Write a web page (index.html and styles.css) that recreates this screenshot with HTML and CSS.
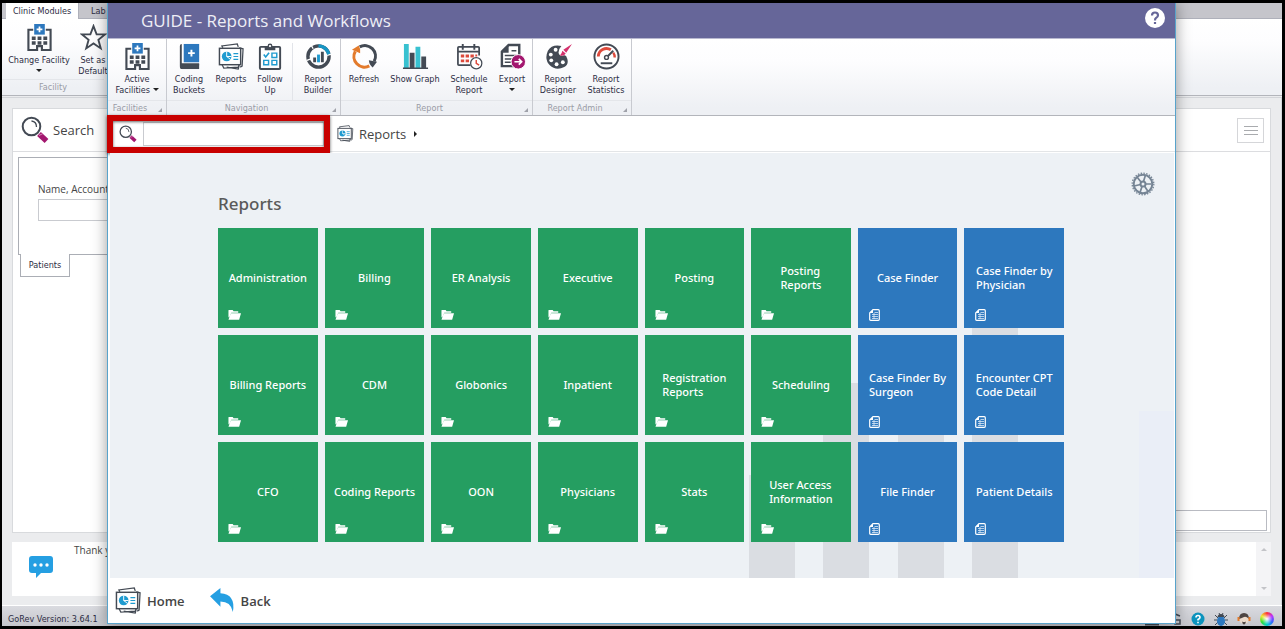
FILE: index.html
```html
<!DOCTYPE html>
<html lang="en">
<head>
    <meta charset="UTF-8">
    <meta name="viewport" content="width=device-width, initial-scale=1.0">
    <title>GUIDE - Reports and Workflows</title>
    <link rel="stylesheet" href="styles.css">
</head>
<body>

    <!--shared icons-->
    <svg class="sprite" width="0" height="0" aria-hidden="true">
        <symbol id="i-facility" viewBox="0 0 26 28">
            <path d="M6.500 6H1.500V27H10.500V23H15.500V27H24.500V6H19.500" fill="none" stroke="#434a54" stroke-width="2.200"/>
            <path d="M5 13h4v3.500H5zM11 13h4v3.500h-4zM17 13h4v3.500h-4zM5 18h4v3.500H5zM11 18h4v3.500h-4zM17 18h4v3.500h-4z" fill="#434a54"/>
            <rect x="7.500" y="0" width="11" height="11" fill="#2d78be"/>
            <path d="M13 2.500v6M10 5.500h6" stroke="#fff" stroke-width="1.800"/>
        </symbol>
        <symbol id="i-star" viewBox="0 0 26 26">
            <path d="M13 2l3 8h8l-6.300 5.200L20 23.500l-7-4.800-7 4.800 2.300-8.300L2 10h8z" fill="none" stroke="#434a54" stroke-width="1.800"/>
        </symbol>
        <symbol id="i-book" viewBox="0 0 26 28">
            <path d="M3 3Q3 1 5 1V21H23V23H6v2H22v2H5Q3 27 3 24z" fill="#434a54"/>
            <path d="M5 22h18v5H5z" fill="#434a54"/>
            <rect x="7" y="1" width="16" height="19" fill="#2d78be"/>
            <path d="M15 7v7M11.500 10.500h7" stroke="#fff" stroke-width="2"/>
        </symbol>
        <symbol id="i-reports" viewBox="0 0 28 28">
            <path d="M5 5L4 3 20 1l1 3M22 5l4 1-1 18-2 1M4 22l2 4 15-1 1-3M9 25l12 2 1-4" fill="#fff" stroke="#434a54" stroke-width="1.300"/>
            <rect x="1.500" y="5.500" width="22" height="17" fill="#fff" stroke="#434a54" stroke-width="1.500"/>
            <circle cx="9" cy="14" r="5" fill="#1f9bd0"/>
            <path d="M9 14V9M9 14h5M9 14l4 3" stroke="#fff"/>
            <path d="M16 11h5M16 14h5M16 17h5" stroke="#1f9bd0" stroke-width="1.200"/>
        </symbol>
        <symbol id="i-follow" viewBox="0 0 26 28">
            <path d="M9 4H3q-1 0-1 1v21q0 1 1 1h19q1 0 1-1V5q0-1-1-1h-6" fill="none" stroke="#434a54" stroke-width="2"/>
            <path d="M7 3h3q0-2.500 2.500-2.500T15 3h3v4.500H7z" fill="#434a54"/>
            <circle cx="12.500" cy="3.200" r="1.200" fill="#fff"/>
            <path d="M6 12l2 2.500 3.500-4.500" fill="none" stroke="#1f9bd0" stroke-width="1.700"/>
            <path d="M14.500 10.500h5v4.500h-5zM6 18h5v4.500H6zM14.500 18h5v4.500h-5z" fill="none" stroke="#1f9bd0" stroke-width="1.500"/>
        </symbol>
        <symbol id="i-builder" viewBox="0 0 28 28">
            <circle cx="14" cy="14" r="11" fill="none" stroke="#434a54" stroke-width="3.500"/>
            <path d="M14 3A11 11 0 0 1 24.800 12" fill="none" stroke="#1796c4" stroke-width="3.500"/>
            <path d="M8.500 6L6.500 2.500M23 13l4-1.500M2 18l4-1.500" stroke="#fff" stroke-width="1.300"/>
            <path d="M8.500 15h3v5h-3zM16.500 9h3v11h-3z" fill="#434a54"/>
            <path d="M12.500 12h3v8h-3z" fill="#1f9bd0"/>
        </symbol>
        <symbol id="i-refresh" viewBox="0 0 28 28">
            <path d="M9 4.100A11 11 0 0 1 24 19" fill="none" stroke="#434a54" stroke-width="3.200"/>
            <path d="M18.500 18l8.500 1.500-4.500 6q-3.500-2.500-4-7.500z" fill="#434a54"/>
            <path d="M19 23.800A11 11 0 0 1 4.500 8.500" fill="none" stroke="#e37b2c" stroke-width="3.200"/>
            <path d="M9.500 10.500L1 7l7-4.500q2 3 1.500 8z" fill="#e37b2c"/>
        </symbol>
        <symbol id="i-graph" viewBox="0 0 28 28">
            <path d="M2 1h5v25H2zM14 4h5v22h-5z" fill="#38c1d0"/>
            <path d="M8 10h5v16H8zM20 14h5v12h-5zM1 25.500h26V27H1z" fill="#434a54"/>
        </symbol>
        <symbol id="i-schedule" viewBox="0 0 28 28">
            <path d="M15 23H3q-1 0-1-1V5q0-1 1-1h20q1 0 1 1v8M2 9h22" fill="none" stroke="#434a54" stroke-width="1.800"/>
            <path d="M7 1v6M19 1v6" stroke="#434a54" stroke-width="2"/>
            <path d="M5 12h3.500v3H5zM10 12h3.500v3H10zM15 12h3.500v3H15zM20 12h2v2h-2zM5 17h3.500v3H5zM10 17h3.500v3H10z" fill="#dd4a3c"/>
            <circle cx="21" cy="21" r="5.800" fill="#fff" stroke="#434a54" stroke-width="1.300"/>
            <path d="M21 17.500V21l3 2" fill="none" stroke="#dd4a3c" stroke-width="1.500"/>
        </symbol>
        <symbol id="i-export" viewBox="0 0 28 28">
            <path d="M3 9L10 2h11v22H3z" fill="#fff" stroke="#434a54" stroke-width="2.500"/>
            <path d="M10 2v8H3z" fill="#434a54"/>
            <path d="M13 8h5M6 13h12M6 16.500h8M6 20h7" stroke="#434a54" stroke-width="1.500"/>
            <circle cx="20" cy="19.500" r="7.500" fill="#a3176f" stroke="#fff"/>
            <path d="M16 19.500h7M20.500 16.500l3 3-3 3" fill="none" stroke="#fff" stroke-width="1.700"/>
        </symbol>
        <symbol id="i-designer" viewBox="0 0 28 28">
            <path d="M17 3Q7 1 3 8-1 17 5 23t15 2q5-3 3-9-1-4-4-3-4 1-5-3 0-4 3-7z" fill="#434a54"/>
            <g fill="#fff"><circle cx="11" cy="7" r="2"/><circle cx="6" cy="12" r="2"/><circle cx="6.500" cy="18" r="2"/><circle cx="12" cy="22" r="2"/><circle cx="18.500" cy="20" r="2"/></g>
            <path d="M28 1L19 7l3 3zM18 8l3.500 3q-2 3-6 2 2-2 2.500-5z" fill="#d4316c"/>
        </symbol>
        <symbol id="i-stats" viewBox="0 0 28 28">
            <circle cx="14" cy="14" r="12.500" fill="#fff" stroke="#434a54" stroke-width="2"/>
            <path d="M5.500 14a8.500 8.500 0 0 1 13-7" fill="none" stroke="#dd4a3c" stroke-width="3"/>
            <path d="M21 10a8 8 0 0 1 1.500 5" fill="none" stroke="#dd4a3c" stroke-width="2.500"/>
            <path d="M14 15l7-7" stroke="#434a54" stroke-width="2"/>
            <circle cx="14" cy="15" r="2" fill="#fff" stroke="#434a54" stroke-width="1.500"/>
            <path d="M8 21h12" stroke="#434a54" stroke-width="2"/>
        </symbol>
        <symbol id="i-search" viewBox="0 0 28 28">
            <circle cx="10.500" cy="10.500" r="8.800" fill="#fff" stroke="#434a54" stroke-width="2"/>
            <path d="M10.500 5q5 .5 5 6" fill="none" stroke="#434a54" stroke-width="1.300"/>
            <path d="M18 18l7.500 7" stroke="#a3176f" stroke-width="5.500"/>
            <path d="M18 19.500l4-2" stroke="#d88abb"/>
        </symbol>
        <symbol id="i-folder" viewBox="0 0 14 11">
            <path d="M1 0h4l1 1.500h5V3H3.500L1.500 8H.500V.500z" fill="#fff"/>
            <path d="M3 3.700H14l-2 6.800H.500z" fill="#fff"/>
        </symbol>
        <symbol id="i-doc" viewBox="0 0 11 12">
            <path d="M4 .700h5.300q1 0 1 1v8.600q0 1-1 1H1.700q-1 0-1-1V4z" fill="none" stroke="#fff" stroke-width="1.200"/>
            <path d="M4 .500v3.500H.500z" fill="#fff"/>
            <path d="M3 5.500h6M3 7.500h6M3 9.500h6M5.500 3.500H9M5 4v6" fill="none" stroke="#dbe9f6" stroke-width=".800"/>
        </symbol>
    </svg>

    <div class="app">
        <div class="tab_row">
            <button class="tab active">Clinic Modules</button>
            <button class="tab">Lab</button>
        </div>

        <div class="app_ribbon">
            <div class="app_group">
                <div class="group_btns">
                    <button class="ribbon_btn w70"><svg><use href="#i-facility"/></svg><span>Change Facility</span><i class="caret"></i></button>
                    <button class="ribbon_btn w34"><svg><use href="#i-star"/></svg><span>Set as Default</span></button>
                </div>
                <div class="app_group_title">Facility</div>
            </div>
        </div>

        <div class="content">
            <div class="panel">
                <div class="panel_header">
                    <svg class="search_icon"><use href="#i-search"/></svg>
                    <h2>Search</h2>
                    <button class="menu_btn" aria-label="Menu"><i></i><i></i><i></i></button>
                </div>
                <div class="patient_form">
                    <label for="patient_name">Name, Account</label>
                    <input type="text" id="patient_name">
                </div>
                <button class="patient_tab">Patients</button>
                <input type="text" class="panel_input" aria-label="Details">
            </div>

            <div class="message">
                <svg class="chat" viewBox="0 0 24 22">
                    <path d="M3 0h18q3 0 3 3v11q0 3-3 3h-9l-5 5v-5H3q-3 0-3-3V3q0-3 3-3z" fill="#259fe2"/>
                    <g fill="#fff"><circle cx="6" cy="9" r="1.700"/><circle cx="12" cy="9" r="1.700"/><circle cx="18" cy="9" r="1.700"/></g>
                </svg>
                <p>Thank you</p>
                <div class="scroll"><i class="up"></i><i class="down"></i></div>
            </div>
        </div>

        <div class="status">
            <span>GoRev Version: 3.64.1</span>
            <div class="status_icons">
                <svg viewBox="0 0 14 14"><path d="M2 3h10v8H2zM0 12.500h14" fill="none" stroke="#434a54" stroke-width="2"/></svg>
                <svg viewBox="0 0 14 14"><path d="M7 2l5 2M7 8h5v4H7z" fill="none" stroke="#434a54" stroke-width="1.500"/></svg>
                <svg viewBox="0 0 14 14"><circle cx="7" cy="7" r="6.500" fill="#0c93bd"/><path d="M5 5.500Q5 3.500 7 3.500T9 5.500Q9 6.500 7 7.500V8.500M7 9.700v1.500" fill="none" stroke="#fff" stroke-width="1.600"/></svg>
                <svg viewBox="0 0 14 14"><path d="M1 3l3 3M0 8h3M1 13l3-3M13 3l-3 3M14 8h-3M13 13l-3-3M5 1l1 2M9 1L8 3" stroke="#434a54"/><ellipse cx="7" cy="9" rx="4" ry="5" fill="#2d78be"/><path d="M3.500 5Q4 2 7 2t3.500 3z" fill="#434a54"/></svg>
                <svg viewBox="0 0 14 14"><circle cx="7" cy="7" r="5" fill="#ead9cb"/><path d="M2 7Q2 1 7 1t5 6Q9 4 7 5T2 7z" fill="#4d4543"/><path d="M1.500 5v4M12.500 5v4" stroke="#e37b2c" stroke-width="2"/><path d="M5 9.500q2 1 4 0-.5 3-2 3t-2-3z" fill="#4d4543"/></svg>
                <span class="wheel"></span>
            </div>
        </div>

        <!--reports window-->
        <div class="dialog">
            <div class="title_bar">
                <h1>GUIDE - Reports and Workflows</h1>
                <button class="help" aria-label="Help"><svg viewBox="0 0 20 20"><path d="M7 7.500Q7 4.500 10 4.500t3 2.800Q13 9 11 10 10 10.500 10 12.500M10 14v2" fill="none" stroke="#666699" stroke-width="2.200"/></svg></button>
            </div>

            <div class="ribbon">
                <div class="group">
                    <div class="group_btns">
                        <button class="ribbon_btn w52"><svg><use href="#i-facility"/></svg><span>Active Facilities <i class="caret"></i></span></button>
                    </div>
                    <div class="group_title">Facilities</div>
                </div>
                <div class="group nav">
                    <div class="group_btns">
                        <button class="ribbon_btn w40"><svg><use href="#i-book"/></svg><span>Coding Buckets</span></button>
                        <button class="ribbon_btn w40"><svg><use href="#i-reports"/></svg><span>Reports</span></button>
                        <button class="ribbon_btn w34"><svg><use href="#i-follow"/></svg><span>Follow<br>Up</span></button>
                        <i class="sep"></i>
                        <button class="ribbon_btn w40"><svg><use href="#i-builder"/></svg><span>Report Builder</span></button>
                    </div>
                    <div class="group_title">Navigation</div>
                </div>
                <div class="group">
                    <div class="group_btns">
                        <button class="ribbon_btn w40"><svg><use href="#i-refresh"/></svg><span>Refresh</span></button>
                        <button class="ribbon_btn w56"><svg><use href="#i-graph"/></svg><span>Show Graph</span></button>
                        <button class="ribbon_btn w46"><svg><use href="#i-schedule"/></svg><span>Schedule Report</span></button>
                        <button class="ribbon_btn w34"><svg><use href="#i-export"/></svg><span>Export</span><i class="caret"></i></button>
                    </div>
                    <div class="group_title">Report</div>
                </div>
                <div class="group nav">
                    <div class="group_btns">
                        <button class="ribbon_btn w46"><svg><use href="#i-designer"/></svg><span>Report Designer</span></button>
                        <button class="ribbon_btn w46"><svg><use href="#i-stats"/></svg><span>Report Statistics</span></button>
                    </div>
                    <div class="group_title">Report Admin</div>
                </div>
            </div>

            <div class="crumb_row">
                <div class="find">
                    <label for="find_box"><svg><use href="#i-search"/></svg></label>
                    <input type="text" id="find_box" aria-label="Find">
                </div>
                <a href="#" class="crumb"><svg><use href="#i-reports"/></svg>Reports</a>
                <i class="crumb_arrow"></i>
            </div>

            <div class="reports">
                <svg class="backdrop" viewBox="0 0 425 425" aria-hidden="true">
                    <path d="M0 322h46v103H0zM74 230h46v195H74zM149 240h46v185h-46zM223 140h46v285h-46z" fill="#dadde2"/>
                    <path d="M390 258h35v167h-35z" fill="#eaeef7"/>
                </svg>
                <button class="gear" aria-label="Settings">
                    <svg viewBox="0 0 24 24" fill="none" stroke="#758494">
                        <circle cx="12" cy="12" r="9.300" stroke-width="2"/>
                        <circle cx="12" cy="12" r="10.800" stroke-width="1.300" stroke-dasharray="1.500 1.330"/>
                        <circle cx="12" cy="12" r="2.500" stroke-width="2"/>
                        <path d="M12.500 9.500L14.500 3M14.500 12l6 0M13.500 14l3.500 5.500M11 14.500L9 20.500M9.500 12.500L3 14M10 10L6 5" stroke-width="1.700"/>
                    </svg>
                </button>
                <h2>Reports</h2>
                <div class="tiles">
                    <button class="tile"><span>Administration</span><svg><use href="#i-folder"/></svg></button>
                    <button class="tile"><span>Billing</span><svg><use href="#i-folder"/></svg></button>
                    <button class="tile"><span>ER Analysis</span><svg><use href="#i-folder"/></svg></button>
                    <button class="tile"><span>Executive</span><svg><use href="#i-folder"/></svg></button>
                    <button class="tile"><span>Posting</span><svg><use href="#i-folder"/></svg></button>
                    <button class="tile"><span>Posting<br>Reports</span><svg><use href="#i-folder"/></svg></button>
                    <button class="tile blue"><span>Case Finder</span><svg><use href="#i-doc"/></svg></button>
                    <button class="tile blue"><span>Case Finder by<br>Physician</span><svg><use href="#i-doc"/></svg></button>

                    <button class="tile"><span>Billing Reports</span><svg><use href="#i-folder"/></svg></button>
                    <button class="tile"><span>CDM</span><svg><use href="#i-folder"/></svg></button>
                    <button class="tile"><span>Globonics</span><svg><use href="#i-folder"/></svg></button>
                    <button class="tile"><span>Inpatient</span><svg><use href="#i-folder"/></svg></button>
                    <button class="tile"><span>Registration<br>Reports</span><svg><use href="#i-folder"/></svg></button>
                    <button class="tile"><span>Scheduling</span><svg><use href="#i-folder"/></svg></button>
                    <button class="tile blue"><span>Case Finder By<br>Surgeon</span><svg><use href="#i-doc"/></svg></button>
                    <button class="tile blue"><span>Encounter CPT<br>Code Detail</span><svg><use href="#i-doc"/></svg></button>

                    <button class="tile"><span>CFO</span><svg><use href="#i-folder"/></svg></button>
                    <button class="tile"><span>Coding Reports</span><svg><use href="#i-folder"/></svg></button>
                    <button class="tile"><span>OON</span><svg><use href="#i-folder"/></svg></button>
                    <button class="tile"><span>Physicians</span><svg><use href="#i-folder"/></svg></button>
                    <button class="tile"><span>Stats</span><svg><use href="#i-folder"/></svg></button>
                    <button class="tile"><span>User Access<br>Information</span><svg><use href="#i-folder"/></svg></button>
                    <button class="tile blue"><span>File Finder</span><svg><use href="#i-doc"/></svg></button>
                    <button class="tile blue"><span>Patient Details</span><svg><use href="#i-doc"/></svg></button>
                </div>
            </div>

            <div class="footer">
                <button><svg><use href="#i-reports"/></svg>Home</button>
                <button><svg viewBox="0 0 26 26"><path d="M1 9L11 1v5q15 1 12 18-2-10-12-10v5z" fill="#259fe2"/></svg>Back</button>
            </div>
        </div>
    </div>
</body>
</html>
```

FILE: styles.css
```css
* {box-sizing:border-box;margin:0;padding:0;}
body {background:#000;font-family:"Open Sans","Noto Sans",sans-serif;color:#454545;}
button {border:0;background:none;font:inherit;color:inherit;cursor:pointer;}
input {border:1px solid #c9cbd0;background:#fff;font:inherit;}
a {color:inherit;text-decoration:none;}
svg {display:block;flex:none;}
.sprite {position:absolute;}

/* main window */
.app {position:relative;display:flex;flex-direction:column;min-height:calc(100vh - 6px);margin:3px 3px 3px 2px;background:#ebecee;overflow:hidden;}
.tab_row {display:flex;height:16px;padding-left:4px;background:#c5c5cb;border-bottom:1px solid #aeb0ba;font:9px/15px "DejaVu Sans Condensed","DejaVu Sans",sans-serif;color:#2d2d44;}
.tab {height:16px;padding:0 12px;border-right:1px solid #aeb0ba;}
.tab.active {width:73px;padding:0;background:#fff;}
.app_ribbon {display:flex;height:77px;background:linear-gradient(#fff,#fdfdfe 30%,#eef0f4 90%);border-bottom:1px solid #b3b5bb;}
.app_group {display:flex;flex-direction:column;padding-top:5px;}
.app_group_title {width:102px;color:#9a9ca6;font:9px/15px "DejaVu Sans Condensed","DejaVu Sans",sans-serif;text-align:center;border-top:1px solid #e4e6ea;}

/* ribbon buttons */
.group_btns {display:flex;flex:1;gap:2px;padding:0 2px;}
.ribbon_btn {display:flex;flex-direction:column;align-items:center;flex:none;font:9px/11px "DejaVu Sans Condensed","DejaVu Sans",sans-serif;color:#2d2d44;}
.ribbon_btn > svg {width:27px;height:27px;margin-bottom:4px;}
.w34 {width:34px;}
.w40 {width:40px;}
.w46 {width:46px;}
.w52 {width:52px;}
.w56 {width:56px;}
.w70 {width:70px;}
.caret {display:inline-block;border:3px solid transparent;border-top-color:#222;border-bottom:0;}
.ribbon_btn > .caret {margin-top:3px;}
.ribbon_btn span .caret {vertical-align:2px;}
.sep {width:1px;background:#e2e4e9;}

/* search panel */
.content {flex:1;display:flex;flex-direction:column;gap:9px;padding:10px 10px 9px;border:1px solid #d3d5d9;border-width:1px 1px 0 0;margin:1px 0 0;}
.panel {flex:1;display:flex;flex-direction:column;background:#fff;border:1px solid #d8dadd;}
.panel_header {display:flex;align-items:center;height:43px;padding:0 6px 0 8px;border-bottom:1px solid #dcdde0;}
.panel_header h2 {margin-left:4px;font-size:13px;font-weight:400;}
.search_icon {width:28px;height:28px;}
.menu_btn {display:flex;flex-direction:column;align-items:center;justify-content:center;gap:3px;width:27px;height:25px;margin-left:auto;border:1px solid #d5d6d9;}
.menu_btn i {width:14px;height:1px;background:#a9abae;}
.patient_form {display:flex;flex-direction:column;gap:2px;width:50%;height:98px;margin:5px 5px 0;padding:24px 19px;border:1px solid #abaeb5;font-size:10px;}
.patient_form input {height:22px;margin-top:1px;}
.patient_tab {width:50px;height:23px;margin:-1px 0 0 7px;background:#fff;border:1px solid #abaeb5;border-top:0;font:9px/20px "DejaVu Sans Condensed","DejaVu Sans",sans-serif;color:#2d2d44;}
.panel_input {width:50%;height:21px;margin:auto 3px 1px auto;border-color:#b9bbc2;}

.message {display:flex;height:54px;padding-left:17px;background:#fff;}
.chat {width:24px;height:22px;margin-top:14px;}
.message p {margin-left:21px;font-size:10px;line-height:16px;}
.scroll {display:flex;flex-direction:column;justify-content:space-between;align-items:center;width:15px;margin-left:auto;padding:6px 0;background:#f4f4f6;}
.scroll i {border:3px solid transparent;}
.scroll .up {border-bottom-color:#c3c4c8;border-top:0;}
.scroll .down {border-top-color:#c3c4c8;border-bottom:0;}

.status {display:flex;align-items:center;justify-content:space-between;height:21px;padding:5px 8px 0 6px;background:linear-gradient(#dadbe0,#c5c6cc);border-top:1px solid #fff;font:9px/14px "DejaVu Sans Condensed","DejaVu Sans",sans-serif;color:#2d2d44;}
.status_icons {display:flex;gap:9px;}
.status_icons svg {width:14px;height:14px;}
.wheel {width:14px;height:14px;border-radius:50%;background:radial-gradient(#fff,transparent 55%),conic-gradient(#f33,#b3f,#36f,#0cc,#3d3,#ee3,#f33);}

/* reports window */
.dialog {position:absolute;top:0;bottom:2px;left:105px;right:106px;display:flex;flex-direction:column;background:#fff;border:1px solid #58a3cb;border-top:0;box-shadow:0 0 14px rgba(0,0,0,0.4);}
.title_bar {display:flex;align-items:center;justify-content:space-between;height:35px;padding:0 10px 0 33px;background:#666699;color:#eeeef6;}
.title_bar h1 {font-size:17px;font-weight:400;}
.help {width:20px;height:20px;margin-bottom:5px;background:#fff;border-radius:50%;}

.ribbon {display:flex;height:78px;background:linear-gradient(#fff,#fdfdfe 30%,#eef0f4 90%);border-top:1px solid #b9b9d0;border-bottom:1px solid #b3b5bb;}
.group {position:relative;display:flex;flex-direction:column;padding-top:4px;border-right:1px solid #c8cad0;}
.group .group_btns {gap:3px;padding:0 3px;}
.group.nav .group_btns {gap:2px;padding:0 2px;}
.group_title {height:15px;padding-right:14px;color:#9a9ca6;font:9px/14px "DejaVu Sans Condensed","DejaVu Sans",sans-serif;text-align:center;border-top:1px solid #e4e6ea;}
.group_title::after {content:"";position:absolute;right:4px;bottom:3px;border:2px solid #a0a2aa;border-top-color:transparent;border-left-color:transparent;}
.group .sep {margin:0 3px;}

.crumb_row {display:flex;align-items:center;height:36px;border-bottom:1px solid #e3e5e7;}
.find {position:relative;display:flex;align-items:center;height:26px;width:222px;padding:0 6px 0 11px;}
.find::after {content:"";position:absolute;top:-6px;bottom:-6px;left:-1px;right:0;border:6px solid #c80000;box-shadow:0 1px 3px rgba(0,0,0,0.6),inset 0 1px 3px rgba(0,0,0,0.6);pointer-events:none;}
.find svg {width:18px;height:18px;}
.find input {flex:1;min-width:0;height:24px;margin-left:6px;}
.crumb {display:flex;align-items:center;gap:5px;margin-left:7px;font-size:13px;}
.crumb svg {width:17px;height:17px;}
.crumb_arrow {margin-left:8px;border:3px solid transparent;border-left-color:#222;border-right:0;}

.reports {position:relative;flex:1;margin:1px 1px 0 2px;padding:39px 110px 36px 108px;background:#edf1f5;}
.reports h2 {height:36px;font:500 17px/24px "Noto Sans","Open Sans",sans-serif;color:#5a5a5a;}
.backdrop {position:absolute;right:0;bottom:0;width:425px;height:425px;}
.gear {position:absolute;top:19px;right:19px;width:24px;height:24px;}
.tiles {position:relative;display:grid;grid-template-columns:repeat(8,1fr);grid-auto-rows:100px;gap:7px;}
.tile {position:relative;display:flex;align-items:center;justify-content:center;background:#259e61;color:#fff;font:500 11px/14px "Noto Sans","Open Sans",sans-serif;text-align:left;}
.tile.blue {background:#2d78be;}
.tile svg {position:absolute;left:10px;bottom:7px;width:13px;height:12px;}

.footer {display:flex;align-items:center;gap:24px;height:45px;padding-left:7px;}
.footer button {display:flex;align-items:center;gap:5px;font-size:13px;font-weight:600;}
.footer svg {width:27px;height:27px;}
```
